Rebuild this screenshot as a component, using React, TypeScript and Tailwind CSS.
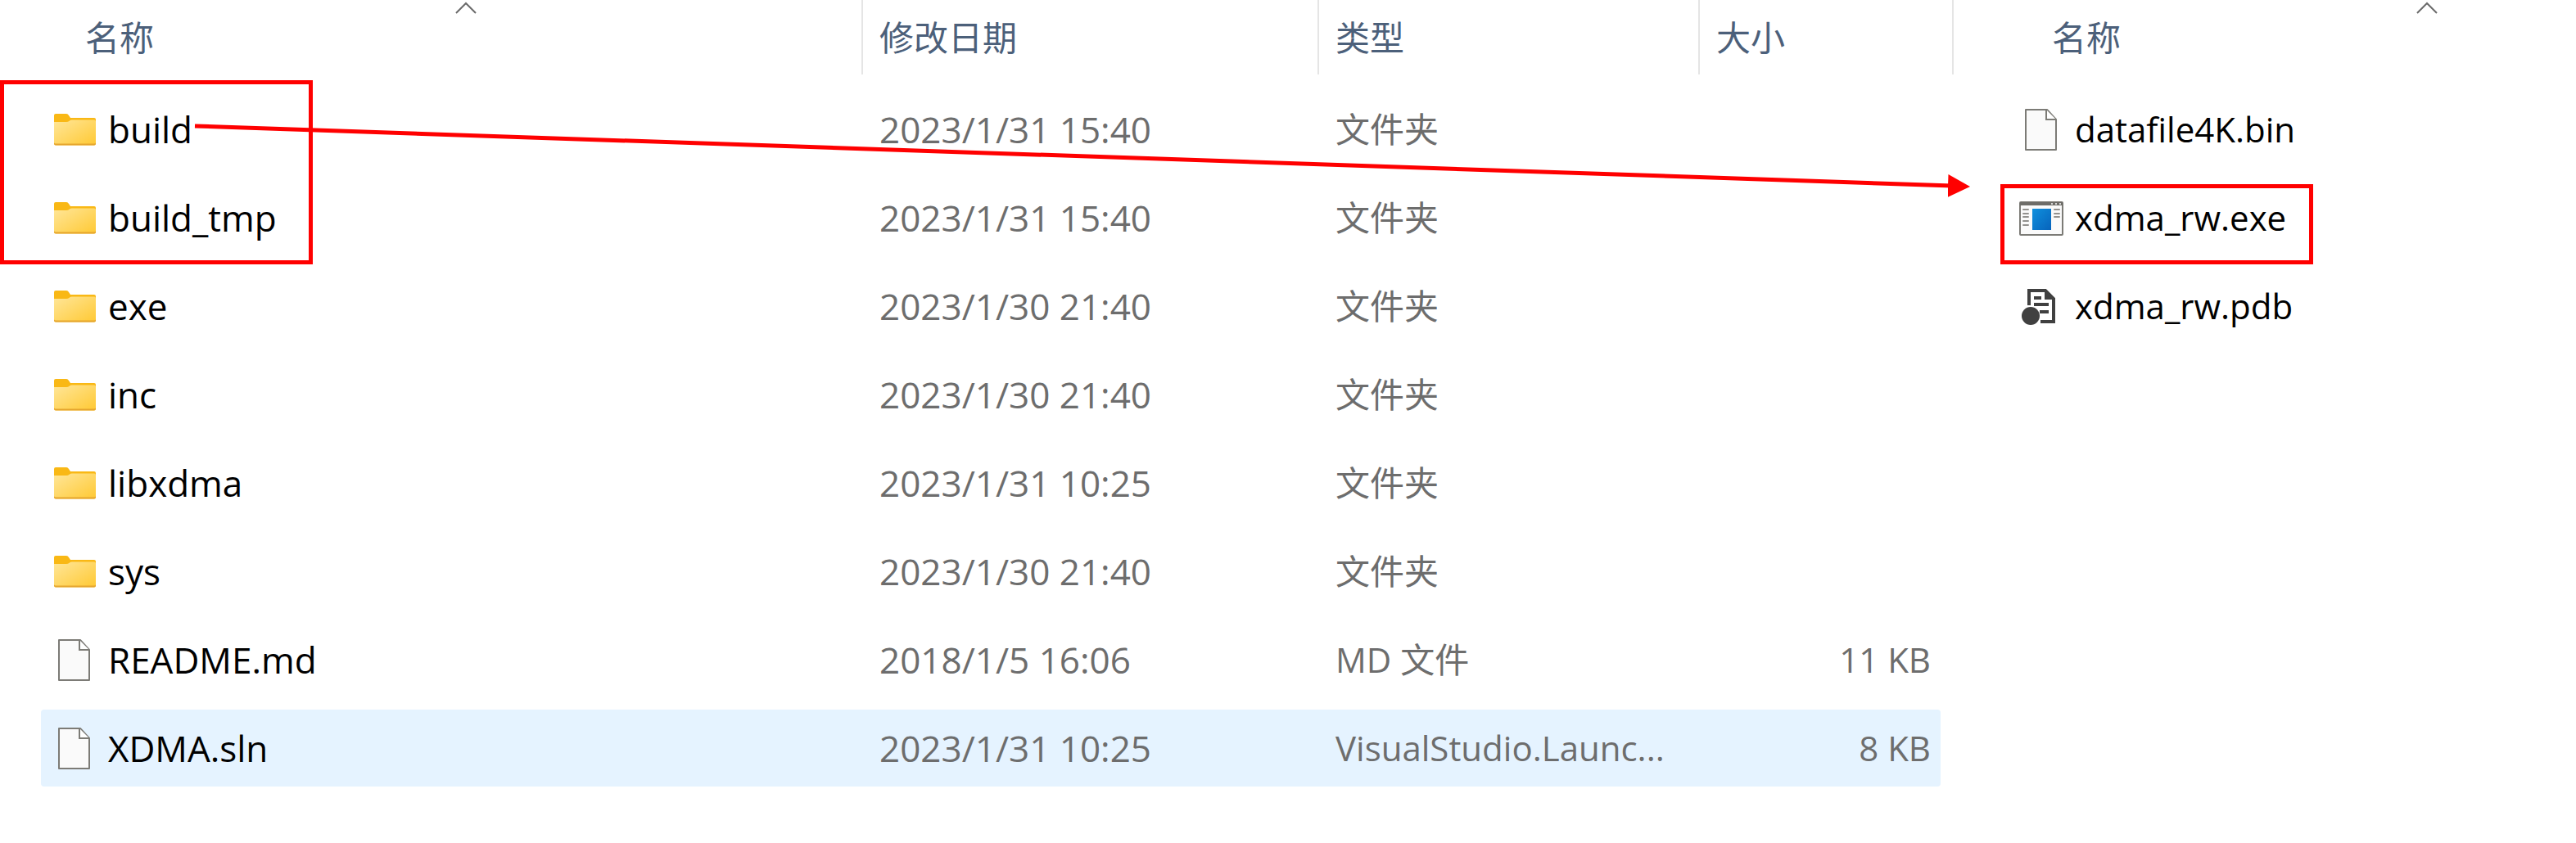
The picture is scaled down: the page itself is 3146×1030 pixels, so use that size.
import type { ReactNode } from 'react';

type IconKind = 'folder' | 'file' | 'app' | 'pdb';

interface Entry {
  name: string;
  icon: IconKind;
  date?: string;
  type?: string;
  size?: string;
  selected?: boolean;
}

const projectFiles: Entry[] = [
  { name: 'build', icon: 'folder', date: '2023/1/31 15:40', type: '文件夹' },
  { name: 'build_tmp', icon: 'folder', date: '2023/1/31 15:40', type: '文件夹' },
  { name: 'exe', icon: 'folder', date: '2023/1/30 21:40', type: '文件夹' },
  { name: 'inc', icon: 'folder', date: '2023/1/30 21:40', type: '文件夹' },
  { name: 'libxdma', icon: 'folder', date: '2023/1/31 10:25', type: '文件夹' },
  { name: 'sys', icon: 'folder', date: '2023/1/30 21:40', type: '文件夹' },
  { name: 'README.md', icon: 'file', date: '2018/1/5 16:06', type: 'MD 文件', size: '11 KB' },
  {
    name: 'XDMA.sln',
    icon: 'file',
    date: '2023/1/31 10:25',
    type: 'VisualStudio.Launc...',
    size: '8 KB',
    selected: true,
  },
];

const buildFiles: Entry[] = [
  { name: 'datafile4K.bin', icon: 'file' },
  { name: 'xdma_rw.exe', icon: 'app' },
  { name: 'xdma_rw.pdb', icon: 'pdb' },
];

function FolderIcon() {
  return (
    <svg width="54" height="54" viewBox="0 0 54 54" aria-hidden="true">
      <defs>
        <linearGradient id="folder" x1="0" y1="0" x2="1" y2="1">
          <stop offset="0" stopColor="#ffe699" />
          <stop offset="1" stopColor="#ffc933" />
        </linearGradient>
      </defs>
      <path d="M2 10a2 2 0 0 1 2-2h13q2 0 3 2l2 3h29a2 2 0 0 1 2 2v10H2z" fill="#f9b815" />
      <path d="M2 18h15q2 0 4-1.500q1-1 3-1h27a2 2 0 0 1 2 2v27a2 2 0 0 1-2 2H4a2 2 0 0 1-2-2z" fill="url(#folder)" />
      <path d="M2 43.500v1a2 2 0 0 0 2 2h47a2 2 0 0 0 2-2v-1q-1 1-2 1H4q-1 0-2-1z" fill="#e5a52e" />
    </svg>
  );
}

function FileIcon() {
  return (
    <svg width="54" height="54" viewBox="0 0 54 54" aria-hidden="true">
      <path d="M8 3h26l11 12v37H8z" fill="#fafafa" stroke="#7c7b76" strokeWidth="2" strokeLinejoin="round" />
      <path d="M33 3v12h12" fill="#fff" stroke="#7c7b76" strokeWidth="2" />
    </svg>
  );
}

function AppIcon() {
  return (
    <svg width="54" height="54" viewBox="0 0 54 54" aria-hidden="true">
      <defs>
        <linearGradient id="app" x1="0" y1="0" x2="1" y2="1">
          <stop offset="0" stopColor="#0f90de" />
          <stop offset="1" stopColor="#0763bb" />
        </linearGradient>
      </defs>
      <rect x="1" y="8" width="52" height="40" rx="1" fill="#fafafa" stroke="#7c7b76" strokeWidth="2" />
      <path d="M1 8h52v4H1z" fill="#6d6c68" />
      <path d="M39 10h2M44 10h2M49 10h2" stroke="#d8d8d6" strokeWidth="2" />
      <rect x="16" y="16" width="23" height="26" fill="url(#app)" />
      <path
        d="M5 17h6M5 22h6M5 26h6M5 31h6M5 36h6M43 17h6M43 22h6M43 26h6"
        stroke="#92918e"
        strokeWidth="2"
        strokeLinecap="round"
      />
    </svg>
  );
}

function PdbIcon() {
  return (
    <svg width="54" height="54" viewBox="0 0 54 54" aria-hidden="true">
      <path d="M12 26V8h20l10 10v28H26" fill="none" stroke="#404040" strokeWidth="4" />
      <path d="M31 6l13 13H31z" fill="#404040" />
      <path d="M18 17h9M18 25h18M25 34h11" stroke="#404040" strokeWidth="4" />
      <circle cx="14" cy="39" r="11" fill="#404040" />
    </svg>
  );
}

const icons: Record<IconKind, () => ReactNode> = {
  folder: FolderIcon,
  file: FileIcon,
  app: AppIcon,
  pdb: PdbIcon,
};

function SortArrow() {
  return (
    <svg
      className="absolute left-1/2 top-[2px] -translate-x-1/2"
      width="28"
      height="16"
      viewBox="0 0 28 16"
      fill="none"
      stroke="#6b6b6b"
      strokeWidth="2"
      aria-hidden="true"
    >
      <path d="M2 14L14 2l12 12" />
    </svg>
  );
}

function NameHeader() {
  return (
    <th scope="col" className="p-0 pl-9 align-top font-normal">
      <button type="button" className="relative block h-[91px] w-full pl-[18px] text-left">
        名称
        <SortArrow />
      </button>
    </th>
  );
}

function HeaderCell({ children }: { children: ReactNode }) {
  return (
    <th scope="col" className="p-0 align-top font-normal">
      <button type="button" className="block h-[91px] w-full border-l-2 border-[#e5e5e5] pl-5 text-left">
        {children}
      </button>
    </th>
  );
}

function NameCell({ entry, textSize = 'text-[44px]' }: { entry: Entry; textSize?: string }) {
  const Icon = icons[entry.icon];
  return (
    <td className="p-0">
      <div
        className={`flex h-[94px] items-center gap-[14px] rounded-l pl-[14px] text-black ${textSize} ${
          entry.selected ? 'bg-[#e5f3ff]' : ''
        }`}
      >
        <Icon />
        <span>{entry.name}</span>
      </div>
    </td>
  );
}

export default function App() {
  return (
    <main className="relative flex min-h-screen bg-white font-['Open_Sans','Noto_Sans_CJK_SC',sans-serif] leading-[56px] whitespace-nowrap">
      <section className="relative min-w-0 flex-1 pl-[50px]">
        <table className="w-full table-fixed border-collapse">
          <colgroup>
            <col />
            <col className="w-[557px]" />
            <col className="w-[465px]" />
            <col className="w-[310px]" />
          </colgroup>
          <thead>
            <tr className="h-[104px] text-[42px] text-[#4c607a]">
              <NameHeader />
              <HeaderCell>修改日期</HeaderCell>
              <HeaderCell>类型</HeaderCell>
              <HeaderCell>大小</HeaderCell>
            </tr>
          </thead>
          <tbody>
            {projectFiles.map((entry) => {
              const fill = entry.selected ? 'bg-[#e5f3ff]' : '';
              return (
                <tr key={entry.name} className="h-[108px] text-[#6d6d6d]">
                  <NameCell entry={entry} />
                  <td className="p-0">
                    <div className={`flex h-[94px] items-center pl-[22px] text-[44px] ${fill}`}>{entry.date}</div>
                  </td>
                  <td className="p-0">
                    <div className={`flex h-[94px] items-center pl-[22px] text-[42px] ${fill}`}>{entry.type}</div>
                  </td>
                  <td className="p-0">
                    <div className={`mr-[14px] flex h-[94px] items-center justify-end rounded-r pr-3 text-[42px] ${fill}`}>
                      {entry.size}
                    </div>
                  </td>
                </tr>
              );
            })}
          </tbody>
        </table>

        {/* marks over the list */}
        <div className="absolute left-0 top-[98px] h-[225px] w-[382px] border-[5px] border-[#ff0000]" />
        <div className="pointer-events-none absolute -right-[22px] left-[238px] top-[150px] z-10 h-[100px]">
          <svg className="h-full w-full overflow-visible" aria-hidden="true">
            <defs>
              <marker
                id="head"
                markerUnits="userSpaceOnUse"
                markerWidth="28"
                markerHeight="28"
                refX="27"
                refY="14"
                orient="auto"
              >
                <path d="M0 0l27 14L0 28z" fill="#ff0000" />
              </marker>
            </defs>
            <line x1="0" y1="4" x2="99%" y2="77" stroke="#ff0000" strokeWidth="5" />
            <line x1="0" y1="4" x2="100%" y2="78" stroke="none" markerEnd="url(#head)" />
          </svg>
        </div>
      </section>

      <section className="relative w-[762px] shrink-0 overflow-hidden">
        <table className="ml-[68px] w-[988px] table-fixed border-collapse">
          <thead>
            <tr className="h-[104px] text-[42px] text-[#4c607a]">
              <NameHeader />
            </tr>
          </thead>
          <tbody>
            {buildFiles.map((entry) => (
              <tr key={entry.name} className="h-[108px]">
                <NameCell entry={entry} textSize="text-[42px]" />
              </tr>
            ))}
          </tbody>
        </table>
        <div className="absolute left-0 top-0 h-[91px] border-l-2 border-[#e5e5e5]" />
        <div className="absolute left-[59px] top-[225px] h-[98px] w-[382px] border-[5px] border-[#ff0000]" />
      </section>
    </main>
  );
}
